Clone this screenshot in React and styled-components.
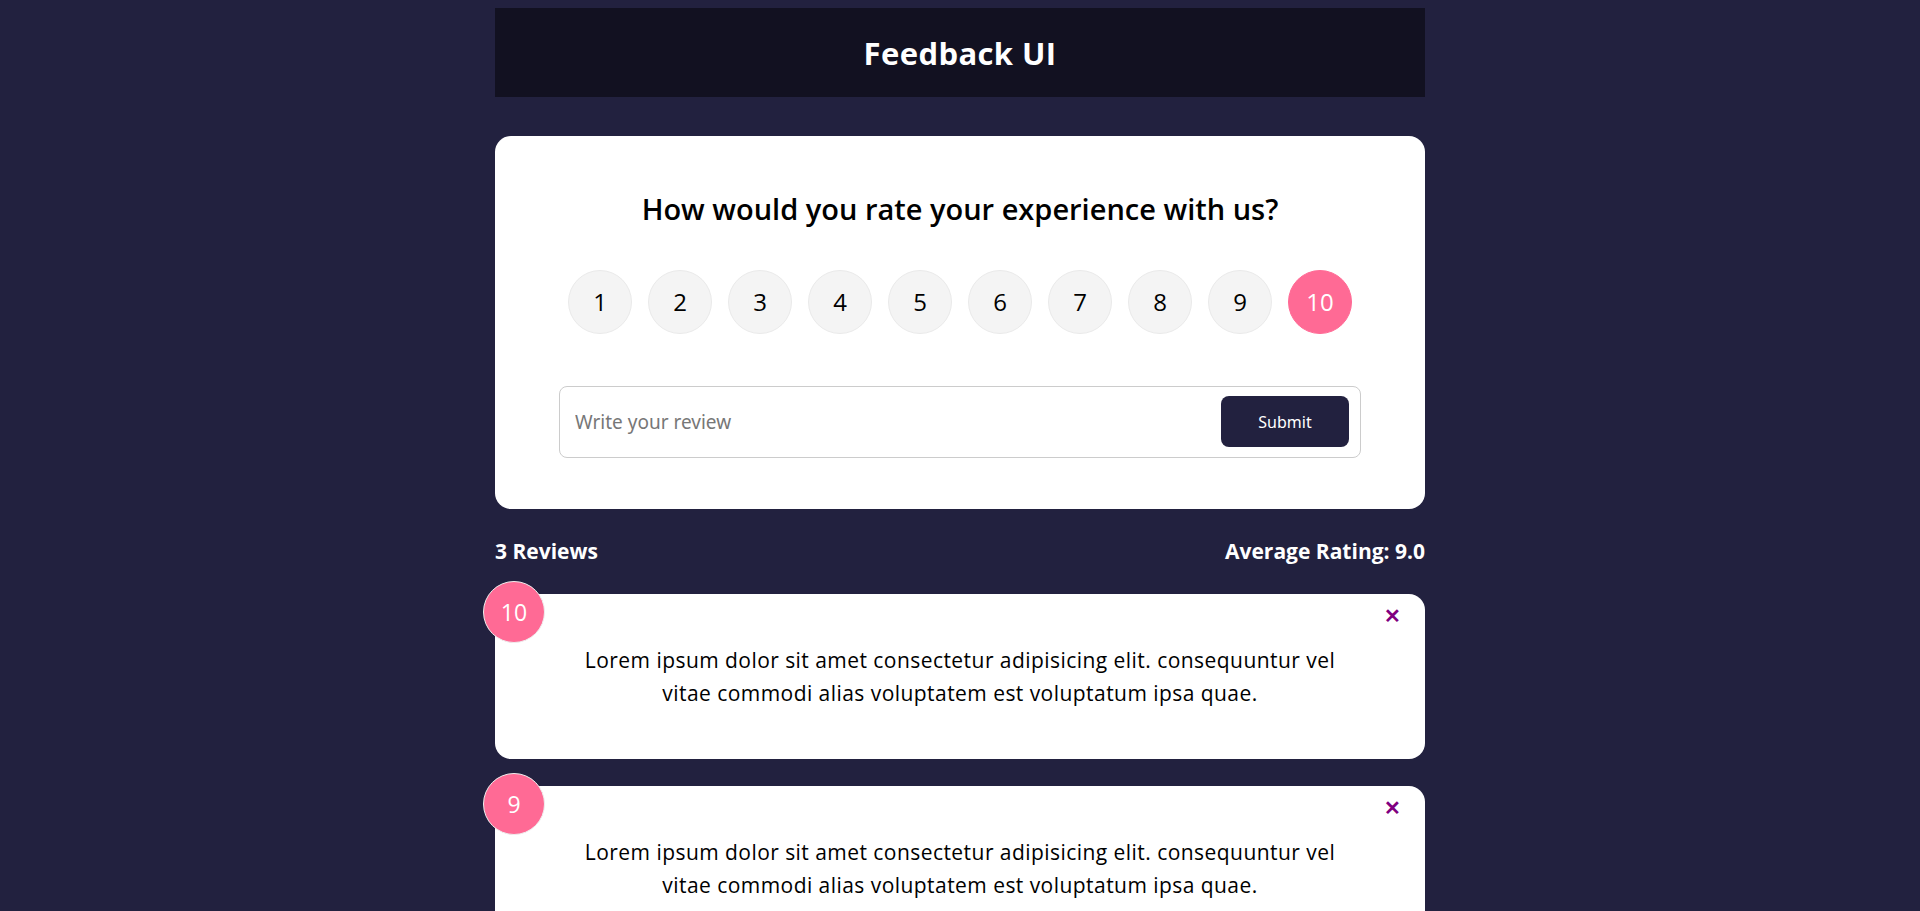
import { useState } from 'react';
import styled, { createGlobalStyle } from 'styled-components';

const GlobalStyle = createGlobalStyle`
  * { box-sizing: border-box; }
  body {
    margin: 0;
    background-color: #22213f;
    font-family: "Open Sans", "Liberation Sans", sans-serif;
    color: #000;
  }
`;

const Container = styled.div`
  width: 930px;
  margin: 0 auto;
  padding-top: 8px;
`;

const Header = styled.header`
  height: 89px;
  background-color: #121121;
  display: flex;
  align-items: center;
  justify-content: center;
  h2 {
    margin: 0;
    color: #fff;
    font-size: 31px;
    font-weight: 700;
    letter-spacing: 0.4px;
  }
`;

const Card = styled.div`
  position: relative;
  background-color: #fff;
  border-radius: 16px;
  margin-top: ${(p) => p.$mt || 0}px;
  padding: ${(p) => p.$pad};
`;

const Title = styled.h2`
  margin: 0 0 40px;
  text-align: center;
  font-size: 29px;
  font-weight: 600;
  line-height: 1.4;
`;

const RatingList = styled.ul`
  list-style: none;
  margin: 0 0 52px;
  padding: 0;
  display: flex;
  justify-content: center;
  gap: 16px;
`;

const RatingItem = styled.li`
  width: 64px;
  height: 64px;
  border-radius: 50%;
  border: 1px solid ${(p) => (p.$selected ? '#ff6a95' : '#eaeaea')};
  background-color: ${(p) => (p.$selected ? '#ff6a95' : '#f4f4f4')};
  color: ${(p) => (p.$selected ? '#fff' : '#000')};
  display: flex;
  align-items: center;
  justify-content: center;
  font-size: 24px;
  cursor: pointer;
`;

const InputGroup = styled.div`
  display: flex;
  align-items: center;
  height: 72px;
  border: 1px solid #ccc;
  border-radius: 8px;
  padding: 0 11px 0 13px;
`;

const Input = styled.input`
  flex: 1;
  border: none;
  outline: none;
  font-size: 19px;
  font-family: "Noto Sans", "Liberation Sans", sans-serif;
  color: #333;
  &::placeholder { color: #777; }
`;

const Button = styled.button`
  width: 128px;
  height: 51px;
  border: none;
  border-radius: 8px;
  background-color: #22213f;
  color: #fff;
  font-size: 16px;
  font-family: "Noto Sans", "Liberation Sans", sans-serif;
  cursor: pointer;
`;

const Stats = styled.div`
  display: flex;
  justify-content: space-between;
  align-items: center;
  height: 85px;
  color: #fff;
  font-size: 21px;
  font-weight: 700;
`;

const ReviewList = styled.div`
  display: flex;
  flex-direction: column;
  gap: 27px;
`;

const Badge = styled.div`
  position: absolute;
  top: -13px;
  left: -12px;
  width: 62px;
  height: 62px;
  border-radius: 50%;
  border: 1px solid #eee;
  background-color: #ff6a95;
  color: #fff;
  display: flex;
  align-items: center;
  justify-content: center;
  font-size: 23px;
`;

const Close = styled.button`
  position: absolute;
  top: 10px;
  right: 24px;
  border: none;
  background: none;
  color: purple;
  font-size: 20px;
  font-weight: 700;
  cursor: pointer;
  padding: 0;
`;

const ReviewText = styled.p`
  margin: 0;
  text-align: center;
  font-size: 21px;
  letter-spacing: 0.45px;
  line-height: 33px;
`;

const reviews = [
  { id: 1, rating: 10, text: 'Lorem ipsum dolor sit amet consectetur adipisicing elit. consequuntur vel vitae commodi alias voluptatem est voluptatum ipsa quae.' },
  { id: 2, rating: 9, text: 'Lorem ipsum dolor sit amet consectetur adipisicing elit. consequuntur vel vitae commodi alias voluptatem est voluptatum ipsa quae.' },
  { id: 3, rating: 8, text: 'Lorem ipsum dolor sit amet consectetur adipisicing elit. consequuntur vel vitae commodi alias voluptatem est voluptatum ipsa quae.' },
];

export default function App() {
  const [selected, setSelected] = useState(10);
  const [items, setItems] = useState(reviews);
  const avg = items.length ? items.reduce((a, r) => a + r.rating, 0) / items.length : 0;

  return (
    <>
      <GlobalStyle />
      <Container>
        <Header><h2>Feedback UI</h2></Header>
        <Card $mt={39} $pad="53px 64px 51px">
          <Title>How would you rate your experience with us?</Title>
          <RatingList>
            {[1, 2, 3, 4, 5, 6, 7, 8, 9, 10].map((n) => (
              <RatingItem key={n} $selected={n === selected} onClick={() => setSelected(n)}>{n}</RatingItem>
            ))}
          </RatingList>
          <InputGroup>
            <Input placeholder="Write your review" />
            <Button type="submit">Submit</Button>
          </InputGroup>
        </Card>
        <Stats>
          <span>{items.length} Reviews</span>
          <span>Average Rating: {avg.toFixed(1)}</span>
        </Stats>
        <ReviewList>
          {items.map((r) => (
            <Card key={r.id} $pad="50px 68px 49px">
              <Badge>{r.rating}</Badge>
              <Close onClick={() => setItems(items.filter((i) => i.id !== r.id))}>✕</Close>
              <ReviewText>{r.text}</ReviewText>
            </Card>
          ))}
        </ReviewList>
      </Container>
    </>
  );
}
